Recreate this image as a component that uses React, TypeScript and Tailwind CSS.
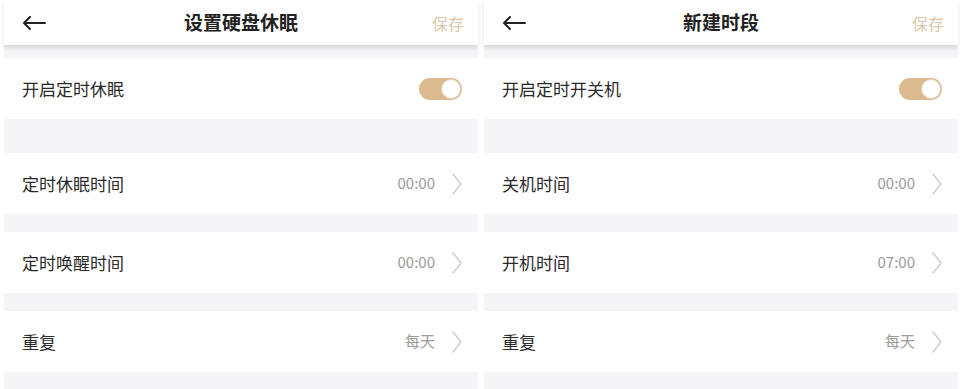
const font = { fontFamily: '"Noto Sans CJK SC", "Noto Sans", sans-serif' }

type Row = { label: string; value?: string; toggle?: boolean }

const panels: { title: string; rows: Row[] }[] = [
  {
    title: '设置硬盘休眠',
    rows: [
      { label: '开启定时休眠', toggle: true },
      { label: '定时休眠时间', value: '00:00' },
      { label: '定时唤醒时间', value: '00:00' },
      { label: '重复', value: '每天' },
    ],
  },
  {
    title: '新建时段',
    rows: [
      { label: '开启定时开关机', toggle: true },
      { label: '关机时间', value: '00:00' },
      { label: '开机时间', value: '07:00' },
      { label: '重复', value: '每天' },
    ],
  },
]

function BackArrow() {
  return (
    <svg width="24" height="14" viewBox="0 0 24 14" fill="none">
      <path d="M23 7H2M8 1L2 7l6 6" stroke="#222" strokeWidth="2" strokeLinecap="round" strokeLinejoin="round" />
    </svg>
  )
}

function Chevron() {
  return (
    <svg width="10" height="22" viewBox="0 0 10 22" fill="none">
      <path d="M1 1l8 10-8 10" stroke="#c9c9cc" strokeWidth="1.3" strokeLinecap="round" strokeLinejoin="round" />
    </svg>
  )
}

function Toggle() {
  return (
    <div className="w-[43px] h-[22px] rounded-full bg-[#dcb98f] flex items-center justify-end pr-[1px]">
      <div className="w-[20px] h-[20px] rounded-full bg-white border border-[#e6d3bc]" />
    </div>
  )
}

function SettingRow({ row }: { row: Row }) {
  return (
    <div className="h-[61px] bg-white flex items-center justify-between pl-[18px] pr-[16px]">
      <span className="text-[17px] text-[#2a2a2a]">{row.label}</span>
      {row.toggle ? (
        <Toggle />
      ) : (
        <div className="flex items-center gap-[17px]">
          <span className="text-[15px] text-[#9a9a9a]">{row.value}</span>
          <Chevron />
        </div>
      )}
    </div>
  )
}

function Panel({ title, rows }: { title: string; rows: Row[] }) {
  return (
    <div className="w-[474px] flex flex-col">
      <div className="h-[45px] bg-white flex items-center justify-between pl-[18px] pr-[14px] relative z-10 shadow-[0_3px_4px_rgba(0,0,0,0.12)]">
        <BackArrow />
        <span className="absolute left-1/2 -translate-x-1/2 text-[19px] font-bold text-[#222]">{title}</span>
        <span className="text-[16px] text-[#dcc6ad]">保存</span>
      </div>
      <div className="flex-1 bg-[#f5f5f7] flex flex-col pt-[13px]">
        <SettingRow row={rows[0]} />
        <div className="h-[34px]" />
        <SettingRow row={rows[1]} />
        <div className="h-[18px]" />
        <SettingRow row={rows[2]} />
        <div className="h-[18px]" />
        <SettingRow row={rows[3]} />
      </div>
    </div>
  )
}

export default function App() {
  return (
    <div className="w-[960px] h-[389px] bg-white flex gap-[6px] pl-[4px] overflow-hidden" style={font}>
      {panels.map((p) => (
        <Panel key={p.title} title={p.title} rows={p.rows} />
      ))}
    </div>
  )
}
